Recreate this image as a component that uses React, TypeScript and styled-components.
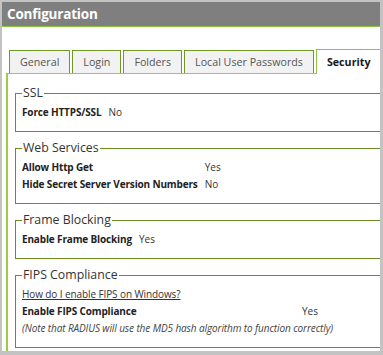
import React from 'react';
import styled, { createGlobalStyle } from 'styled-components';

const Global = createGlobalStyle`
  html, body { margin: 0; padding: 0; background: #fff; }
  body { font-family: "Open Sans", "DejaVu Sans", sans-serif; }
`;

const Frame = styled.div`
  width: 383px;
  height: 355px;
  box-sizing: border-box;
  background: #c3c3c3;
  padding: 2px 3px 4px 2px;
  overflow: hidden;
`;

const Window = styled.div`
  background: #fff;
  height: 100%;
  overflow: hidden;
`;

const Header = styled.div`
  height: 24px;
  background: #7f7f7f;
  border-bottom: 1px solid #8cc63f;
  color: #fff;
  font-weight: 700;
  font-size: 13.5px;
  letter-spacing: -0.2px;
  line-height: 24px;
  padding-left: 5px;
`;

const Body = styled.div`
  padding: 22px 0 0 4px;
  width: 440px;
`;

const TabRow = styled.div`
  display: flex;
  align-items: flex-end;
  gap: 2px;
  padding-left: 3px;
  position: relative;
  z-index: 1;
`;

const Tab = styled.div<{ $active?: boolean }>`
  box-sizing: border-box;
  height: ${(p) => (p.$active ? 25 : 23)}px;
  margin-bottom: ${(p) => (p.$active ? -1 : 0)}px;
  padding: 0 10px;
  border: 1px solid ${(p) => (p.$active ? '#8cc63f' : '#6e9a23')};
  border-bottom: none;
  background: ${(p) => (p.$active ? '#fff' : '#f2f2f2')};
  color: ${(p) => (p.$active ? '#1a1a1a' : '#555')};
  font-weight: ${(p) => (p.$active ? 700 : 400)};
  font-size: 10.7px;
  display: flex;
  align-items: center;
  white-space: nowrap;
`;

const Panel = styled.div`
  border-top: 1px solid #9ccb4a;
  border-left: 2px solid #9ccb4a;
  padding: 10px 0 8px 7px;
`;

const Group = styled.fieldset`
  margin: 0 0 7px 0;
  padding: 2px 6px 10px;
  border: 1px solid #6b8e23;
  min-width: 0;
`;

const Legend = styled.legend`
  padding: 0 1px;
  font-size: 12.3px;
  line-height: 18px;
  color: #333;
`;

const Grid = styled.div<{ $label?: number }>`
  display: grid;
  grid-template-columns: ${(p) => (p.$label ? `${p.$label}px` : 'max-content')} 1fr;
  column-gap: 7px;
`;

const Label = styled.div`
  font-size: 10px;
  font-weight: 700;
  letter-spacing: -0.15px;
  line-height: 17px;
  color: #222;
  white-space: nowrap;
`;

const Value = styled.div`
  font-size: 10px;
  line-height: 17px;
  color: #333;
`;

const Wide = styled.div`
  grid-column: 1 / -1;
  font-size: 10px;
  letter-spacing: -0.1px;
  line-height: 17px;
  white-space: nowrap;
`;

const Link = styled.a`
  color: #333;
  text-decoration: underline;
`;

const Note = styled(Wide)`
  font-style: italic;
  color: #444;
`;

export default function App() {
  return (
    <>
      <Global />
      <Frame>
        <Window>
          <Header>Configuration</Header>
          <Body>
            <TabRow>
              <Tab>General</Tab>
              <Tab>Login</Tab>
              <Tab>Folders</Tab>
              <Tab>Local User Passwords</Tab>
              <Tab $active>Security</Tab>
            </TabRow>
            <Panel>
              <Group>
                <Legend>SSL</Legend>
                <Grid>
                  <Label>Force HTTPS/SSL</Label>
                  <Value>No</Value>
                </Grid>
              </Group>
              <Group>
                <Legend>Web Services</Legend>
                <Grid>
                  <Label>Allow Http Get</Label>
                  <Value>Yes</Value>
                  <Label>Hide Secret Server Version Numbers</Label>
                  <Value>No</Value>
                </Grid>
              </Group>
              <Group>
                <Legend>Frame Blocking</Legend>
                <Grid>
                  <Label>Enable Frame Blocking</Label>
                  <Value>Yes</Value>
                </Grid>
              </Group>
              <Group>
                <Legend>FIPS Compliance</Legend>
                <Grid $label={273}>
                  <Wide>
                    <Link href="#">How do I enable FIPS on Windows?</Link>
                  </Wide>
                  <Label>Enable FIPS Compliance</Label>
                  <Value>Yes</Value>
                  <Note>(Note that RADIUS will use the MD5 hash algorithm to function correctly)</Note>
                </Grid>
              </Group>
            </Panel>
          </Body>
        </Window>
      </Frame>
    </>
  );
}
